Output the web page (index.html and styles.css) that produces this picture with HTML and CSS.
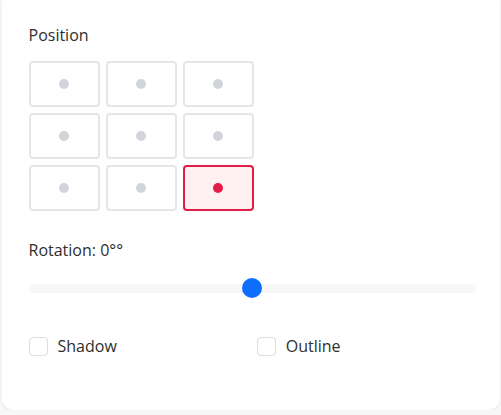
FILE: index.html
```html
<!DOCTYPE html>
<html>
<head>
<meta charset="utf-8">
<link rel="stylesheet" href="styles.css">
</head>
<body>
<div class="card">
  <div class="label">Position</div>
  <div class="grid">
    <button class="cell"><span class="dot"></span></button>
    <button class="cell"><span class="dot"></span></button>
    <button class="cell"><span class="dot"></span></button>
    <button class="cell"><span class="dot"></span></button>
    <button class="cell"><span class="dot"></span></button>
    <button class="cell"><span class="dot"></span></button>
    <button class="cell"><span class="dot"></span></button>
    <button class="cell"><span class="dot"></span></button>
    <button class="cell active"><span class="dot"></span></button>
  </div>
  <div class="label rot">Rotation: 0°°</div>
  <input class="slider" type="range" min="-180" max="180" value="0">
  <div class="checks">
    <label class="check"><span class="box"></span>Shadow</label>
    <label class="check"><span class="box"></span>Outline</label>
  </div>
</div>
</body>
</html>
```
FILE: styles.css
```css
html, body {
  margin: 0;
  padding: 0;
  background: #f7f7f8;
  font-family: "Open Sans", "Noto Sans", sans-serif;
  color: #2e2e2e;
}
.card {
  margin-left: 2px;
  width: 498px;
  height: 410px;
  box-sizing: border-box;
  background: #fff;
  border-radius: 0 0 12px 12px;
  box-shadow: 0 1px 3px rgba(0,0,0,0.07);
  padding: 24px 25px 0 26.5px;
}
.label {
  font-size: 16px;
  line-height: 22px;
  height: 22px;
}
.grid {
  margin-top: 15px;
  display: grid;
  grid-template-columns: repeat(3, 71px);
  grid-auto-rows: 46px;
  column-gap: 6px;
  row-gap: 6px;
}
.cell {
  margin: 0;
  padding: 0;
  box-sizing: border-box;
  border: 2px solid #e6e6ea;
  border-radius: 4px;
  background: #fff;
  display: flex;
  align-items: center;
  justify-content: center;
}
.dot {
  width: 10px;
  height: 10px;
  border-radius: 50%;
  background: #d1d4db;
}
.cell.active {
  border-color: #e11d48;
  background: #fff0f1;
}
.cell.active .dot {
  background: #e11d48;
}
.rot {
  margin-top: 28px;
}
.slider {
  -webkit-appearance: none;
  appearance: none;
  display: block;
  width: 447px;
  height: 20px;
  margin: 17px 0 0 0;
  padding: 0;
  background: transparent;
}
.slider::-webkit-slider-runnable-track {
  height: 9px;
  border-radius: 5px;
  background: #f6f7f9;
}
.slider::-webkit-slider-thumb {
  -webkit-appearance: none;
  appearance: none;
  width: 20px;
  height: 20px;
  border-radius: 50%;
  background: #0d6efd;
  border: none;
  margin-top: -5.5px;
}
.checks {
  margin-top: 38px;
  display: grid;
  grid-template-columns: 1fr 1fr;
  column-gap: 10px;
}
.check {
  display: flex;
  align-items: center;
  gap: 10px;
  font-size: 16px;
  line-height: 20px;
}
.box {
  width: 19px;
  height: 19px;
  box-sizing: border-box;
  border: 1px solid #dcdce1;
  border-radius: 4px;
  background: #fff;
}
```
